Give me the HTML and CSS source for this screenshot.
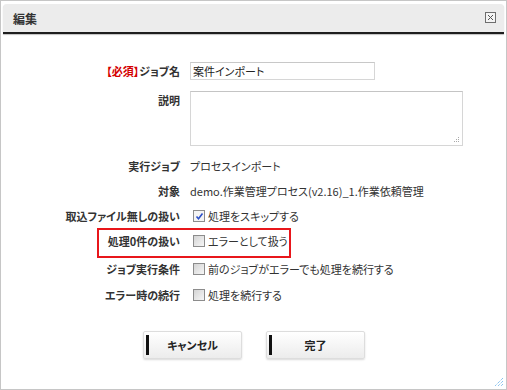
FILE: index.html
```html
<!DOCTYPE html>
<html lang="ja">
<head>
    <meta charset="UTF-8">
    <meta name="viewport" content="width=device-width, initial-scale=1.0">
    <title>編集</title>
    <link rel="stylesheet" href="styles.css">
</head>
<body>
    <div class="dialog">
        <div class="dialog-title">
            <span class="title-text">編集</span>
            <span class="close-btn">
                <svg width="11" height="11" viewBox="0 0 11 11">
                    <rect x="0.5" y="0.5" width="10" height="10" fill="#f4f4f4" stroke="#6e6e6e"/>
                    <path d="M3 3 L8 8 M8 3 L3 8" stroke="#555" stroke-width="1"/>
                </svg>
            </span>
        </div>

        <form class="dialog-body">
            <div class="form-row row-input">
                <label class="row-label"><span class="required">【必須】</span>ジョブ名</label>
                <div class="row-value"><input type="text" class="text-input" value="案件インポート"></div>
            </div>
            <div class="form-row row-area">
                <label class="row-label">説明</label>
                <div class="row-value">
                    <div class="area-wrap">
                        <textarea class="text-area"></textarea>
                        <svg class="area-grip" width="6" height="6" viewBox="0 0 6 6">
                            <rect x="4" y="0" width="1" height="1" fill="#aaa"/>
                            <rect x="2" y="2" width="1" height="1" fill="#aaa"/>
                            <rect x="4" y="2" width="1" height="1" fill="#aaa"/>
                            <rect x="0" y="4" width="1" height="1" fill="#aaa"/>
                            <rect x="2" y="4" width="1" height="1" fill="#aaa"/>
                            <rect x="4" y="4" width="1" height="1" fill="#aaa"/>
                        </svg>
                    </div>
                </div>
            </div>
            <div class="form-row row-text">
                <label class="row-label">実行ジョブ</label>
                <div class="row-value">プロセスインポート</div>
            </div>
            <div class="form-row row-text">
                <label class="row-label">対象</label>
                <div class="row-value">demo.作業管理プロセス(v2.16)_1.作業依頼管理</div>
            </div>
            <div class="form-row row-text">
                <label class="row-label">取込ファイル無しの扱い</label>
                <div class="row-value">
                    <span class="check checked">
                        <svg width="9" height="9" viewBox="0 0 9 9"><path d="M1.5 4.5 L3.5 6.8 L7.5 1.5" fill="none" stroke="#2b50c8" stroke-width="1.6"/></svg>
                    </span>処理をスキップする
                </div>
            </div>
            <div class="form-row row-text row-marked">
                <label class="row-label">処理0件の扱い</label>
                <div class="row-value"><span class="check"></span>エラーとして扱う</div>
            </div>
            <div class="form-row row-text row-cond">
                <label class="row-label">ジョブ実行条件</label>
                <div class="row-value"><span class="check"></span>前のジョブがエラーでも処理を続行する</div>
            </div>
            <div class="form-row row-text">
                <label class="row-label">エラー時の続行</label>
                <div class="row-value"><span class="check"></span>処理を続行する</div>
            </div>

            <div class="button-bar">
                <button type="button" class="btn">キャンセル</button>
                <button type="submit" class="btn">完了</button>
            </div>
        </form>

        <svg class="resize-grip" width="10" height="10" viewBox="0 0 10 10">
            <path d="M9 1 L1 9 M9 4 L4 9 M9 7 L7 9" stroke="#5aaae8" stroke-width="1" stroke-dasharray="1 1"/>
        </svg>
    </div>
</body>
</html>
```

FILE: styles.css
```css
* {
    margin: 0;
    padding: 0;
    box-sizing: border-box;
}

body {
    font-family: "Noto Sans CJK JP", "Noto Sans", sans-serif;
    font-size: 11px;
    font-feature-settings: "palt";
    color: #333;
    background: #fff;
}

.dialog {
    position: relative;
    width: 507px;
    height: 390px;
    border: 1px solid #c6c6c6;
    padding: 2px 2px 0;
}

/* title bar */
.dialog-title {
    display: flex;
    justify-content: space-between;
    align-items: center;
    height: 30px;
    margin-top: 1px;
    padding: 0 8px 0 10px;
    background: #ececec;
    border-radius: 4px 4px 0 0;
    border-bottom: 2px solid #1e1e1e;
    box-shadow: 0 1px 1px rgba(0, 0, 0, 0.25);
}

.title-text {
    font-size: 12px;
    font-weight: bold;
    color: #333;
}

.close-btn {
    display: flex;
    margin-top: -1px;
}

/* form */
.dialog-body {
    display: flex;
    flex-direction: column;
    padding-top: 28px;
}

.form-row {
    display: grid;
    grid-template-columns: 177px 1fr;
    column-gap: 10px;
    position: relative;
}

.row-label {
    text-align: right;
    font-weight: bold;
    color: #333;
    white-space: nowrap;
}

.required {
    color: #d40000;
}

.row-value {
    display: flex;
    align-items: center;
    white-space: nowrap;
}

.row-input {
    line-height: 18px;
    margin-bottom: 11px;
}

.text-input {
    width: 185px;
    height: 18px;
    border: 1px solid #d6d6d6;
    border-top-color: #c8c8c8;
    padding: 0 2px;
    font: inherit;
    font-feature-settings: "palt";
    color: #222;
    outline: none;
}

.row-area {
    line-height: 18px;
    margin-bottom: 10px;
}

.row-area .row-value {
    align-items: flex-start;
}

.area-wrap {
    position: relative;
    width: 273px;
    height: 55px;
}

.text-area {
    display: block;
    width: 100%;
    height: 100%;
    border: 1px solid #d6d6d6;
    border-top-color: #c4c4c4;
    resize: none;
    outline: none;
    font: inherit;
}

.area-grip {
    position: absolute;
    right: 3px;
    bottom: 3px;
}

.row-text {
    line-height: 20px;
    margin-bottom: 5px;
}

/* red highlight drawn over the row */
.row-marked {
    margin-bottom: 8px;
}

.row-marked::before {
    content: "";
    position: absolute;
    left: 94px;
    top: -3px;
    width: 190px;
    height: 26px;
    border: 2px solid #e8161b;
}

.row-cond {
    margin-bottom: 6px;
}

.check {
    display: inline-flex;
    justify-content: center;
    align-items: center;
    width: 12px;
    height: 12px;
    margin: 0 3px 0 3px;
    border: 1px solid #8c8c8c;
    background: linear-gradient(135deg, #d4d4d4, #f6f6f6);
}

.check.checked {
    background: #f4f4f4;
}

/* buttons */
.button-bar {
    display: flex;
    justify-content: center;
    gap: 24px;
    margin-top: 21px;
    padding-left: 1px;
}

.btn {
    position: relative;
    width: 99px;
    height: 28px;
    border: 1px solid #dddddd;
    border-radius: 2px;
    background: linear-gradient(#ffffff, #ececec);
    box-shadow: 0 1px 2px rgba(0, 0, 0, 0.15);
    font: inherit;
    font-feature-settings: "palt";
    font-weight: bold;
    color: #222;
    cursor: pointer;
}

.btn::before {
    content: "";
    position: absolute;
    left: 2px;
    top: 3px;
    width: 3px;
    height: 20px;
    background: #111;
}

.resize-grip {
    position: absolute;
    right: 2px;
    bottom: 2px;
}
```
